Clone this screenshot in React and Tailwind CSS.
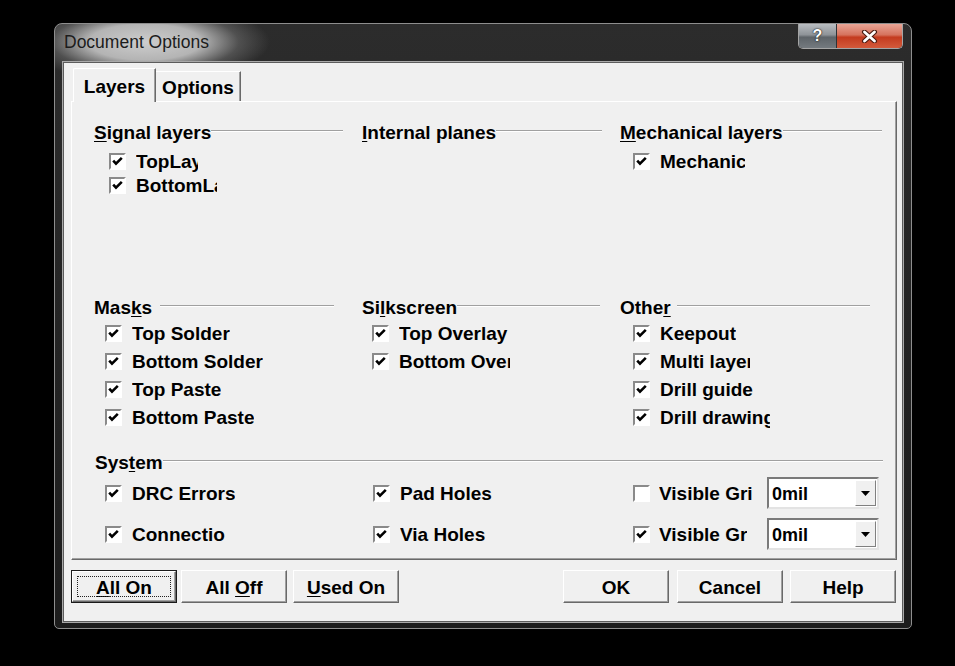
import React from "react"

const Box = ({ checked }) => (
  <span className="w-[17px] h-[17px] shrink-0 border-2 border-t-[#8a8a8a] border-l-[#8a8a8a] border-r-white border-b-white bg-white flex items-center justify-center">
    {checked && (
      <svg width="13" height="13" viewBox="0 0 13 13">
        <polyline points="2.2,5.6 5,8.6 10.8,2.9" fill="none" stroke="#000" strokeWidth="2.6" />
      </svg>
    )}
  </span>
)

const Row = ({ label, checked = true, clip = "", h = "h-[24px]", gap = "ml-[10px]" }) => (
  <div className={"flex items-center " + h}>
    <Box checked={checked} />
    <span className={"overflow-hidden whitespace-nowrap pt-[3px] " + gap + " " + clip}>{label}</span>
  </div>
)

const Heading = ({ children, lineGap = "" }) => (
  <div className="flex items-center h-[20px] leading-[20px]">
    <span className="whitespace-nowrap pt-[3px]">{children}</span>
    <div className={"flex-1 h-0 border-t border-t-[#a0a0a0] border-b border-b-white " + lineGap} />
  </div>
)

const Btn = ({ children, def, className = "" }) => (
  <div className={"h-[33px] w-[106px] " + (def ? "border border-[#1a1a1a] " : "") + className}>
    <div className="w-full h-full border border-t-white border-l-white border-r-[#696969] border-b-[#696969] shadow-[inset_-1px_-1px_0_#a0a0a0] flex items-center justify-center relative pt-[3px]">
      {def && <div className="absolute inset-[4px] border border-dotted border-[#222]" />}
      {children}
    </div>
  </div>
)

const Combo = () => (
  <div className="w-[112px] h-[32px] bg-white border-2 border-t-[#7a7a7a] border-l-[#7a7a7a] border-r-[#e3e3e3] border-b-[#e3e3e3] flex items-center">
    <span className="pl-[3px] pt-[2px] text-[18px]">0mil</span>
    <div className="ml-auto mr-[1px] w-[21px] h-[26px] bg-[#f0f0f0] border border-t-white border-l-white border-r-[#808080] border-b-[#808080] flex items-center justify-center">
      <svg width="9" height="5" viewBox="0 0 9 5">
        <polygon points="0,0 9,0 4.5,5" fill="#000" />
      </svg>
    </div>
  </div>
)

export default function App() {
  return (
    <div className="w-[955px] h-[666px] bg-black pt-[23px] pl-[54px] overflow-hidden">
      <div className="w-[858px] h-[606px] rounded-t-[8px] rounded-b-[5px] border border-[#8e8e8e] flex flex-col bg-[radial-gradient(ellipse_125px_40px_at_90px_18px,#cdcdcd_0%,#b4b4b4_45%,rgba(110,110,110,0.55)_75%,rgba(0,0,0,0)_100%),linear-gradient(180deg,#2c2c2c,#1c1c1c)]">
        {/* title bar */}
        <div className="h-[38px] flex items-start justify-between pl-[9px] pr-[8px]">
          <span className="mt-[7px] leading-[22px] text-[17.5px] text-[#1c1c1c] font-['Liberation_Sans',Arial,sans-serif]">
            Document Options
          </span>
          <div className="flex rounded-b-[5px] border border-t-0 border-[#a5a5a5]">
            <div className="w-[38px] h-[24px] rounded-bl-[4px] bg-[linear-gradient(180deg,#b9bdc1_0%,#8e9398_45%,#5e6469_55%,#747a7f_100%)] flex items-center justify-center border-r border-[#2e3236]">
              <span className="text-white font-bold text-[16px] leading-none font-['Liberation_Sans',Arial,sans-serif] [text-shadow:0_0_2px_#222,0_0_1px_#000]">?</span>
            </div>
            <div className="w-[65px] h-[24px] rounded-br-[4px] bg-[linear-gradient(180deg,#e9a596_0%,#d6735e_45%,#c43b1f_55%,#d35a3b_100%)] flex items-center justify-center">
              <svg width="17" height="13" viewBox="0 0 17 13">
                <path d="M3.5 2 L13.5 11 M13.5 2 L3.5 11" stroke="#4a1a10" strokeWidth="5" strokeLinecap="round" />
                <path d="M3.5 2 L13.5 11 M13.5 2 L3.5 11" stroke="#fff" strokeWidth="2.8" strokeLinecap="round" />
              </svg>
            </div>
          </div>
        </div>

        {/* client area */}
        <div className="ml-[8px] w-[840px] h-[560px] bg-[#f0f0f0] border border-[#5c5c5c] shadow-[0_0_0_1px_#a9a9a9] pl-[7px] pt-[6px] flex flex-col text-black font-bold text-[19px] font-['Liberation_Sans',Arial,sans-serif]">
          {/* tabs */}
          <div className="flex items-end h-[33px] ml-[2px] relative z-10 -mb-[1px]">
            <div className="w-[83px] h-[34px] bg-[#f0f0f0] border border-b-0 border-t-white border-l-white border-r-[#696969] rounded-tl-[2px] flex items-center justify-center pt-[3px] shadow-[inset_-1px_0_0_#a0a0a0]">
              Layers
            </div>
            <div className="w-[85px] h-[30px] bg-[#f0f0f0] border border-b-0 border-t-white border-l-0 border-r-[#696969] flex items-center justify-center pt-[4px] shadow-[inset_-1px_0_0_#a0a0a0] mb-[1px]">
              Options
            </div>
          </div>

          {/* panel */}
          <div className="w-[826px] h-[459px] border border-t-white border-l-white border-r-[#696969] border-b-[#696969] shadow-[inset_-1px_-1px_0_#a0a0a0] pt-[19px] flex flex-col">
            <div className="flex pl-[22px] h-[175px]">
              <div className="w-[249px]">
                <Heading><u className="underline-offset-2">S</u>ignal layers</Heading>
                <div className="mt-[8px] pl-[15px]">
                  <Row label="TopLayer" clip="w-[62px]" />
                  <Row label="BottomLayer" clip="w-[81px]" />
                </div>
              </div>
              <div className="w-[240px] ml-[19px]">
                <Heading><u className="underline-offset-2">I</u>nternal planes</Heading>
              </div>
              <div className="w-[262px] ml-[18px]">
                <Heading><u className="underline-offset-2">M</u>echanical layers</Heading>
                <div className="mt-[8px] pl-[13px]">
                  <Row label="Mechanical1" clip="w-[85px]" />
                </div>
              </div>
            </div>

            <div className="flex pl-[22px] h-[155px]">
              <div className="w-[240px]">
                <Heading lineGap="ml-[8px]">Mas<u className="underline-offset-2">k</u>s</Heading>
                <div className="mt-[3px] pl-[11px]">
                  <Row h="h-[28px]" label="Top Solder" />
                  <Row h="h-[28px]" label="Bottom Solder" />
                  <Row h="h-[28px]" label="Top Paste" />
                  <Row h="h-[28px]" label="Bottom Paste" />
                </div>
              </div>
              <div className="w-[238px] ml-[28px]">
                <Heading>Si<u className="underline-offset-2">l</u>kscreen</Heading>
                <div className="mt-[3px] pl-[10px]">
                  <Row h="h-[28px]" label="Top Overlay" clip="w-[112px]" />
                  <Row h="h-[28px]" label="Bottom Overlay" clip="w-[111px]" />
                </div>
              </div>
              <div className="w-[250px] ml-[20px]">
                <Heading lineGap="ml-[6px]">Othe<u className="underline-offset-2">r</u></Heading>
                <div className="mt-[3px] pl-[13px]">
                  <Row h="h-[28px]" label="Keepout" />
                  <Row h="h-[28px]" label="Multi layer" clip="w-[90px]" />
                  <Row h="h-[28px]" label="Drill guide" />
                  <Row h="h-[28px]" label="Drill drawing" clip="w-[110px]" />
                </div>
              </div>
            </div>

            <div className="pl-[23px]">
              <div className="w-[788px]">
                <Heading>Sys<u className="underline-offset-2">t</u>em</Heading>
              </div>
              <div className="mt-[6px] pl-[10px] flex items-center h-[32px]">
                <div className="w-[268px]"><Row h="h-[32px]" label="DRC Errors" /></div>
                <div className="w-[260px]"><Row h="h-[32px]" label="Pad Holes" /></div>
                <div className="w-[134px]"><Row h="h-[32px]" gap="ml-[9px]" checked={false} label="Visible Grid 1" clip="w-[93px]" /></div>
                <Combo />
              </div>
              <div className="mt-[9px] pl-[10px] flex items-center h-[32px]">
                <div className="w-[268px]"><Row h="h-[32px]" label="Connections" clip="w-[93px]" /></div>
                <div className="w-[260px]"><Row h="h-[32px]" label="Via Holes" /></div>
                <div className="w-[134px]"><Row h="h-[32px]" gap="ml-[9px]" label="Visible Grid 2" clip="w-[88px]" /></div>
                <Combo />
              </div>
            </div>
          </div>

          {/* buttons */}
          <div className="flex mt-[10px]">
            <Btn def><span><u className="underline-offset-2">A</u>ll On</span></Btn>
            <Btn className="ml-[4px]"><span>All <u className="underline-offset-2">O</u>ff</span></Btn>
            <Btn className="ml-[6px]"><span><u className="underline-offset-2">U</u>sed On</span></Btn>
            <Btn className="ml-[164px]">OK</Btn>
            <Btn className="ml-[8px]">Cancel</Btn>
            <Btn className="ml-[7px]">Help</Btn>
          </div>
        </div>
      </div>
    </div>
  )
}
